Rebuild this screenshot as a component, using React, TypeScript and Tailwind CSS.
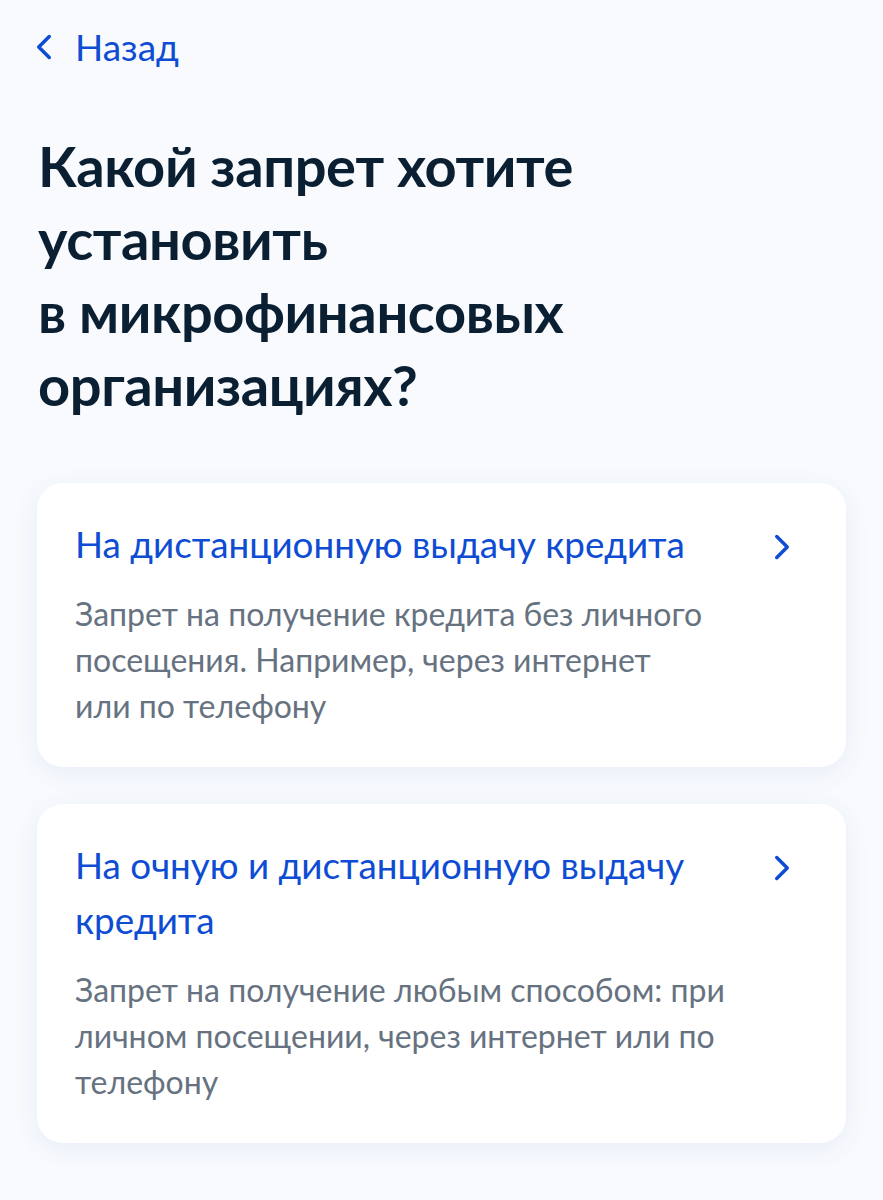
import React from "react";

const Chevron = ({ dir, className }: { dir: "left" | "right"; className?: string }) => (
  <svg viewBox="0 0 24 24" className={className} fill="none" stroke="currentColor" strokeWidth={2} strokeLinecap="round" strokeLinejoin="round">
    {dir === "right" ? <path d="M9 6l6 6-6 6" /> : <path d="M15 6l-6 6 6 6" />}
  </svg>
);

const Card = ({ title, desc }: { title: React.ReactNode; desc: React.ReactNode }) => (
  <div className="bg-white rounded-[26px] shadow-[0_6px_26px_rgba(40,80,170,0.08)] pl-[38px] pr-[43px] pt-[34px] pb-[38px]">
    <div className="flex items-start">
      <div className="flex-1 text-[36.8px] leading-[55px] text-[#0d4cd3]">{title}</div>
      <Chevron dir="right" className="w-[42px] h-[42px] mt-[9px] ml-4 text-[#0d4cd3] shrink-0" />
    </div>
    <div className="mt-[19px] text-[32px] leading-[46px] text-[#66727f]">{desc}</div>
  </div>
);

export default function App() {
  return (
    <div className="min-h-[1200px] bg-[#f8fafd] px-[37px] pt-[25px] pb-10" style={{ fontFamily: "Lato, 'Noto Sans', sans-serif" }}>
      <div className="flex items-center h-[44px] text-[#0d4cd3]">
        <Chevron dir="left" className="w-[42px] h-[42px] -ml-[14px]" />
        <span className="ml-[10px] text-[37px] leading-[44px]">Назад</span>
      </div>
      <h1 className="mt-[60px] pl-px text-[56px] leading-[73px] tracking-[-0.4px] font-bold text-[#0b1f33]">
        Какой запрет хотите
        <br />
        установить
        <br />
        в микрофинансовых
        <br />
        организациях?
      </h1>
      <div className="mt-[62px] flex flex-col gap-[37px]">
        <Card
          title="На дистанционную выдачу кредита"
          desc={
            <>
              Запрет на получение кредита без личного
              <br />
              посещения. Например, через интернет
              <br />
              или по телефону
            </>
          }
        />
        <Card
          title={
            <>
              На очную и дистанционную выдачу
              <br />
              кредита
            </>
          }
          desc={
            <>
              Запрет на получение любым способом: при
              <br />
              личном посещении, через интернет или по
              <br />
              телефону
            </>
          }
        />
      </div>
    </div>
  );
}
